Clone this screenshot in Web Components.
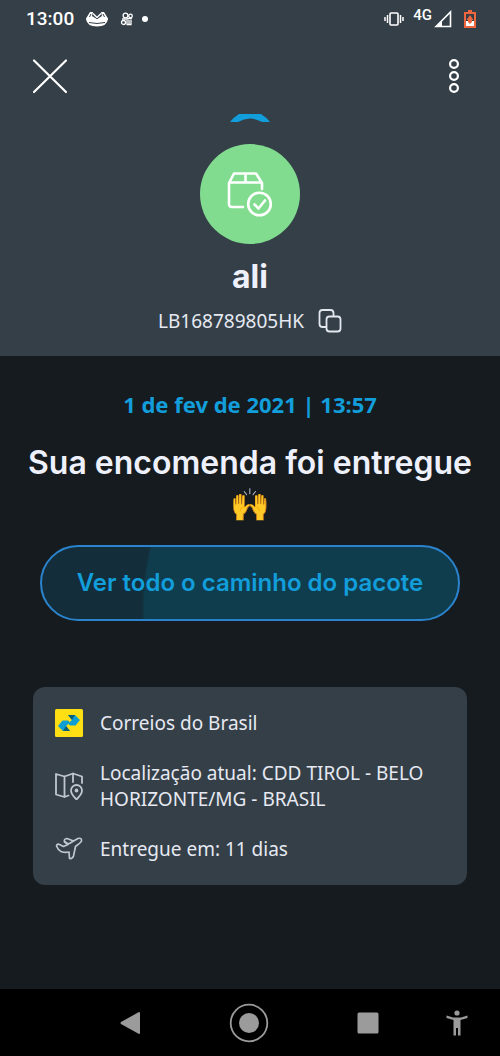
<!DOCTYPE html>
<html lang="pt-BR">
<head>
<meta charset="utf-8">
<meta name="viewport" content="width=device-width, initial-scale=1">
<title>Rastreio - ali</title>
<style>
  html, body { margin: 0; background: #161b1f; }
  body { font-family: "Noto Sans", "Open Sans", sans-serif; color: #e6e9f2; }
</style>
</head>
<body>
<tracking-app></tracking-app>

<script>
const define = (name, html, setup) => {
  const template = document.createElement('template');
  template.innerHTML = html;
  customElements.define(name, class extends HTMLElement {
    constructor() {
      super();
      this.attachShadow({ mode: 'open' }).append(template.content.cloneNode(true));
    }
    connectedCallback() { if (setup) setup(this); }
  });
};

define('status-bar', `
<style>
  :host { display: flex; align-items: center; justify-content: space-between; height: 38px; padding: 0 24px 0 26px; color: #fff; font-family: Roboto, sans-serif; }
  div { display: flex; align-items: center; }
  svg { display: block; }
  .time { font-size: 19px; font-weight: 500; line-height: 24px; }
  .left { gap: 12px; }
  .marks { gap: 8px; }
  .net { font-size: 15px; font-weight: 500; line-height: 16px; padding-bottom: 8px; margin-left: 9px; }
  .signal { margin: 0 12px 0 2px; }
</style>
<div class="left">
  <span class="time">13:00</span>
  <svg width="22" height="16" viewBox="0 0 22 16" aria-hidden="true">
    <path d="M0 7.500L4 1H7L6 5L10 7.500V8.500H0zM22 7.500L18 1H15L16 5L12 7.500V8.500H22z" fill="#fff"/>
    <path d="M3.500 6L5 3M18.500 6L17 3" stroke="#343f48" stroke-width="1"/>
    <path d="M7 2.500L11 6.500L15 2.500" fill="none" stroke="#fff" stroke-width="1.400"/>
    <path d="M0 8H22Q21 15.500 11 15.500T0 8z" fill="#fff"/>
    <path d="M3 11.500Q11 13.500 19 11.500" fill="none" stroke="#343f48" stroke-width="1"/>
  </svg>
  <div class="marks">
    <svg width="14" height="14" viewBox="0 0 14 14" fill="none" stroke="#fff" stroke-width="1.300" aria-hidden="true">
      <circle cx="5.500" cy="3.500" r="2.400"/><circle cx="10.500" cy="4" r="1.800"/><circle cx="3.500" cy="10.500" r="2"/>
      <path d="M2 7h5l5-1M7 8v4.500M9 8v4.500M11 7.500v5H6.500"/>
    </svg>
    <svg width="6" height="6" viewBox="0 0 6 6" aria-hidden="true"><circle cx="3" cy="3" r="3" fill="#fff"/></svg>
  </div>
</div>
<div>
  <svg width="20" height="16" viewBox="0 0 20 16" fill="none" stroke="#fff" aria-hidden="true">
    <rect x="6" y="2" width="8" height="12" rx="1" stroke-width="1.600"/>
    <path d="M3.500 4v8M16.500 4v8" stroke-width="1.500"/><path d="M1 6v4M19 6v4" stroke-width="1.500"/>
  </svg>
  <span class="net">4G</span>
  <svg class="signal" width="18" height="18" viewBox="0 0 18 18" aria-hidden="true">
    <path d="M2 16.500L16.500 2v14.500z" fill="none" stroke="#fff" stroke-width="1.600"/><path d="M2 17l6-6v6z" fill="#fff"/>
  </svg>
  <svg width="12" height="18" viewBox="0 0 12 18" aria-hidden="true">
    <path d="M4 0h4v2h4v16H0V2h4z" fill="#f0673f"/><path d="M2 4h8v7H2z" fill="#343f48"/>
    <path d="M2 11h8v5H2z" fill="#fff"/><path d="M6 5L9.500 10H8V12L6 14L4 12V10H2.500z" fill="#f0673f"/>
  </svg>
</div>`);

define('icon-button', `
<style>
  :host { display: block; }
  button { display: grid; place-items: center; width: 100%; padding: 0; margin: 0; border: 0; background: none; color: inherit; cursor: pointer; }
</style>
<button type="button"><slot></slot></button>`, el => {
  el.shadowRoot.querySelector('button').setAttribute('aria-label', el.getAttribute('label'));
});

define('package-header', `
<style>
  :host { display: block; background: #343f48; padding-bottom: 21px; }
  svg { display: block; }
  .bar { display: flex; justify-content: space-between; align-items: center; padding: 19px 40px 0 32px; color: #fff; }
  .loader { margin: 19px auto 0; }
  .avatar { display: grid; place-items: center; width: 100px; height: 100px; margin: 22px auto 0; border-radius: 50%; background: #82dc90; }
  h1 { margin: 11px 0 0; text-align: center; font: 700 32px/44px Inter, sans-serif; color: #eef1fb; }
  .code { display: flex; justify-content: center; align-items: center; gap: 14px; margin-top: 8px; font-size: 19px; line-height: 28px; }
</style>
<status-bar></status-bar>
<div class="bar">
  <icon-button label="Fechar"><svg width="36" height="38" viewBox="0 0 36 38" fill="none" stroke="#fff" stroke-width="2.200" stroke-linecap="round"><path d="M2 3.500L34 35M34 3.500L2 35"/></svg></icon-button>
  <icon-button label="Mais opções"><svg width="12" height="36" viewBox="0 0 12 36" fill="none" stroke="#fff" stroke-width="2.200"><circle cx="6" cy="6" r="3.900"/><circle cx="6" cy="18" r="3.900"/><circle cx="6" cy="30" r="3.900"/></svg></icon-button>
</div>
<svg class="loader" width="40" height="8" viewBox="0 0 40 8" aria-hidden="true"><path d="M0 8Q4 3 9 0H31Q36 3 40 8H32Q20 1 8 8z" fill="#129ddb"/></svg>
<div class="avatar">
  <svg width="46" height="46" viewBox="0 0 46 46" fill="none" stroke="#fff" stroke-width="2.600" stroke-linejoin="round" stroke-linecap="round" aria-hidden="true">
    <path d="M16 36H5q-3 0-3-3V12L7 2.500H29L35 12V18"/><path d="M3 11.500H34M18.500 3v8"/>
    <circle cx="32.500" cy="33" r="11.300"/><path d="M27.500 33.500l4 4L38 29.500"/>
  </svg>
</div>
<h1>ali</h1>
<div class="code"><span>LB168789805HK</span>
  <icon-button label="Copiar código"><svg width="24" height="24" viewBox="0 0 24 24" fill="none" stroke="#e3e7ee" stroke-width="1.800" stroke-linejoin="round"><rect x="8.500" y="7.500" width="14" height="15" rx="3"/><path d="M8 18H4.500Q1.500 18 1.500 15V4Q1.500 1 4.500 1H12.500Q15.500 1 15.500 4V7"/></svg></icon-button>
</div>`);

define('delivery-status', `
<style>
  :host { display: block; padding: 33px 16px 0; text-align: center; }
  time { display: block; font-size: 22px; font-weight: 700; line-height: 30px; color: #129ddb; }
  h2 { margin: 23px 0 0; font: 600 32px/42px Inter, "Noto Color Emoji", sans-serif; color: #eef1fb; }
  button { display: block; width: calc(100% - 48px); height: 76px; margin: 19px auto 0; border: 2px solid #2a83cc; border-radius: 38px; color: #129ddb; font: 600 24px/32px Inter, sans-serif; cursor: pointer;
    background: radial-gradient(circle 264px at 366px 64px, #103d4e 99%, #132e3a 100%) border-box; }
</style>
<time datetime="2021-02-01T13:57">1 de fev de 2021 | 13:57</time>
<h2>Sua encomenda foi entregue 🙌</h2>
<button type="button">Ver todo o caminho do pacote</button>`);

define('info-row', `
<style>
  :host { display: grid; grid-template-columns: 28px 1fr; gap: 17px; align-items: center; font-size: 19px; line-height: 26px; }
  ::slotted(svg) { display: block; }
</style>
<slot name="icon"></slot><span><slot></slot></span>`);

define('delivery-card', `
<style>
  :host { display: flex; flex-direction: column; gap: 23px; margin: 66px 33px 0; padding: 22px; border-radius: 12px; background: #343f48; }
</style>
<info-row>
  <svg slot="icon" width="28" height="28" viewBox="0 0 28 28" aria-hidden="true"><rect width="28" height="28" rx="1.500" fill="#fddf13"/>
    <path d="M13 6H20L25 11L20.500 16.500H15L13 14.500L17 11z" fill="#0d9fd3"/><path d="M13 6H20L17 11z" fill="#075f79"/>
    <path d="M15 22H8L3 17L7.500 11.500H13L15 13.500L11 17z" fill="#0d9fd3"/><path d="M15 22H8L11 17z" fill="#075f79"/></svg>
  Correios do Brasil
</info-row>
<info-row>
  <svg slot="icon" width="28" height="28" viewBox="0 0 28 28" fill="none" stroke="#bfc6cf" stroke-width="1.800" stroke-linejoin="round" stroke-linecap="round" aria-hidden="true">
    <path d="M13.500 23.500L9.500 25 1 22.500V2L9.500 4.500 18 1.500 27 4.500V11M9.500 4.500V25M18 1.500V10"/>
    <path d="M21.500 27.500Q16 22 16 18.500A5.500 5.500 0 0 1 27 18.500Q27 22 21.500 27.500z"/><circle cx="21.500" cy="18.500" r="1"/></svg>
  Localização atual: CDD TIROL - BELO HORIZONTE/MG - BRASIL
</info-row>
<info-row>
  <svg slot="icon" width="28" height="28" viewBox="0 0 28 28" fill="none" stroke="#bfc6cf" stroke-width="1.700" stroke-linejoin="round" stroke-linecap="round" aria-hidden="true">
    <path d="M1.500 11Q2 8.500 4.500 9.500L8.500 11.500L13 9.500L9.500 7Q8.500 4 12 3.500L18.500 6L23 3.500Q27 2.500 26.500 6Q26 7.500 20.500 11.500L18.500 21Q17.500 24 14.500 23.500L14 17Q10 18 6 16.500Q3 15 1.500 11z"/><path d="M10.500 7Q12 9 14.500 8.500L18.500 6"/></svg>
  Entregue em: 11 dias
</info-row>`);

define('system-nav', `
<style>
  :host { display: flex; height: 67px; align-items: center; background: #000; color: #9b9b9b; padding: 0 32px 0 71px; }
  icon-button { flex: 1; }
  icon-button:last-child { flex: none; margin-left: 19px; }
  svg { display: block; fill: currentColor; }
</style>
<icon-button label="Voltar"><svg width="20" height="24" viewBox="0 0 20 24"><path d="M19 1Q20 1 20 2V22Q20 23 19 23L1 13Q0 12 1 11z"/></svg></icon-button>
<icon-button label="Início"><svg width="40" height="40" viewBox="0 0 40 40"><circle cx="20" cy="20" r="18.300" fill="none" stroke="currentColor" stroke-width="1.800"/><circle cx="20" cy="20" r="10"/></svg></icon-button>
<icon-button label="Recentes"><svg width="22" height="22" viewBox="0 0 22 22"><rect width="21" height="21" x=".5" y=".5" rx="1.500"/></svg></icon-button>
<icon-button label="Acessibilidade"><svg width="22" height="26" viewBox="0 0 22 26"><circle cx="11" cy="3" r="2.600"/><path d="M.5 5.500L7 7.500H15L21.500 5.500V8L14.500 10V25.500H12V18H10V25.500H7.500V10L.5 8z"/></svg></icon-button>`);

define('tracking-app', `
<style>
  :host { display: flex; flex-direction: column; min-height: 100vh; background: #161b1f; }
  main { flex: 1; padding-bottom: 24px; }
</style>
<package-header></package-header>
<main><delivery-status></delivery-status><delivery-card></delivery-card></main>
<system-nav></system-nav>`);
</script>
</body>
</html>
